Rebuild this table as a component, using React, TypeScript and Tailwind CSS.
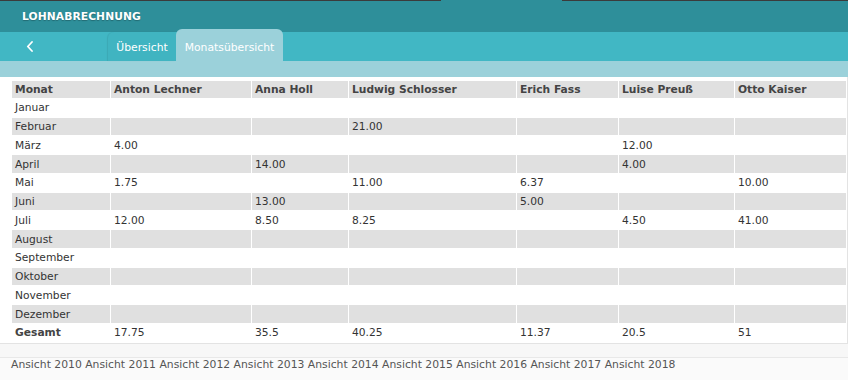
import React from 'react'

const font = { fontFamily: '"DejaVu Sans", Verdana, sans-serif' }

const people = ['Anton Lechner', 'Anna Holl', 'Ludwig Schlosser', 'Erich Fass', 'Luise Preuß', 'Otto Kaiser']
const colWidths = ['w-[98px]', 'w-[140px]', 'w-[96px]', 'w-[167px]', 'w-[101px]', 'w-[115px]', 'w-[111px]']

const rows: [string, string[]][] = [
  ['Januar', ['', '', '', '', '', '']],
  ['Februar', ['', '', '21.00', '', '', '']],
  ['März', ['4.00', '', '', '', '12.00', '']],
  ['April', ['', '14.00', '', '', '4.00', '']],
  ['Mai', ['1.75', '', '11.00', '6.37', '', '10.00']],
  ['Juni', ['', '13.00', '', '5.00', '', '']],
  ['Juli', ['12.00', '8.50', '8.25', '', '4.50', '41.00']],
  ['August', ['', '', '', '', '', '']],
  ['September', ['', '', '', '', '', '']],
  ['Oktober', ['', '', '', '', '', '']],
  ['November', ['', '', '', '', '', '']],
  ['Dezember', ['', '', '', '', '', '']],
]

const totals = ['17.75', '35.5', '40.25', '11.37', '20.5', '51']
const years = [2010, 2011, 2012, 2013, 2014, 2015, 2016, 2017, 2018]

const cell = 'h-[17.75px] p-0 pt-[2px] px-[3px] leading-none'
const head = 'h-[16.75px] p-0 pt-[1px] px-[3px] text-left font-bold text-[#444] bg-[#e0e0e0] leading-none'

export default function App() {
  return (
    <div className="w-[848px] h-[380px] overflow-hidden bg-[#fafafa] text-[10.7px]" style={font}>
      {/* title bar */}
      <div className="h-px bg-[#3b3b3b] flex">
        <div className="ml-[441px] w-[121px] bg-[#2e8f9a]" />
      </div>
      <div className="h-[31px] bg-[#2e8f9a] flex items-center pl-[22px] pt-[1px]">
        <span className="font-bold text-white tracking-[0.1px] [text-shadow:0_1px_1px_rgba(0,0,0,0.25)]">LOHNABRECHNUNG</span>
      </div>

      {/* tabs */}
      <div className="h-[29px] bg-[#41b7c4] flex items-end">
        <div className="w-[108px] h-full flex items-center pl-[26px]">
          <svg width="8" height="11" viewBox="0 0 8 11" fill="none">
            <path d="M6 1 L1.8 5.5 L6 10" stroke="white" strokeWidth="1.8" strokeLinecap="round" strokeLinejoin="round" />
          </svg>
        </div>
        <div className="w-[68px] h-full flex items-center justify-center pt-[3px] text-white text-[10.8px] bg-[#40b4c1] rounded-tl-[6px] shadow-[-1px_0_1px_rgba(0,0,0,0.08)]">
          Übersicht
        </div>
        <div className="relative w-[107px] h-[32px] -mt-[3px] flex items-center justify-center pt-[6px] text-white text-[10.8px] bg-[#9bd1da] rounded-t-[6px]">
          Monatsübersicht
        </div>
      </div>
      <div className="h-[16px] bg-[#9bd1da]" />

      {/* table panel */}
      <div className="bg-white border-r border-b border-[#e3e3e3] pl-[11px] pt-[3px]">
        <table className="table-fixed border-separate border-spacing-[1px] w-[836px] text-[#333]">
          <colgroup>
            {colWidths.map((w, i) => (
              <col key={i} className={w} />
            ))}
          </colgroup>
          <thead>
            <tr>
              <th className={head}>Monat</th>
              {people.map((p) => (
                <th key={p} className={head}>
                  {p}
                </th>
              ))}
            </tr>
          </thead>
          <tbody>
            {rows.map(([month, vals], i) => {
              const bg = i % 2 === 1 ? 'bg-[#e0e0e0]' : 'bg-white'
              return (
                <tr key={month}>
                  <td className={`${cell} ${bg}`}>{month}</td>
                  {vals.map((v, j) => (
                    <td key={j} className={`${cell} ${bg}`}>
                      {v}
                    </td>
                  ))}
                </tr>
              )
            })}
            <tr>
              <td className={`${cell} font-bold text-[#444]`}>Gesamt</td>
              {totals.map((t, j) => (
                <td key={j} className={cell}>
                  {t}
                </td>
              ))}
            </tr>
          </tbody>
        </table>
      </div>

      {/* footer */}
      <div className="h-[13px] bg-[#f7f7f7]" />
      <div className="border-t border-[#e8e8e8] pt-[1px] pl-[11px] leading-[12px] text-[10.8px] text-[#555]">
        {years.map((y) => `Ansicht ${y}`).join(' ')}
      </div>
    </div>
  )
}
